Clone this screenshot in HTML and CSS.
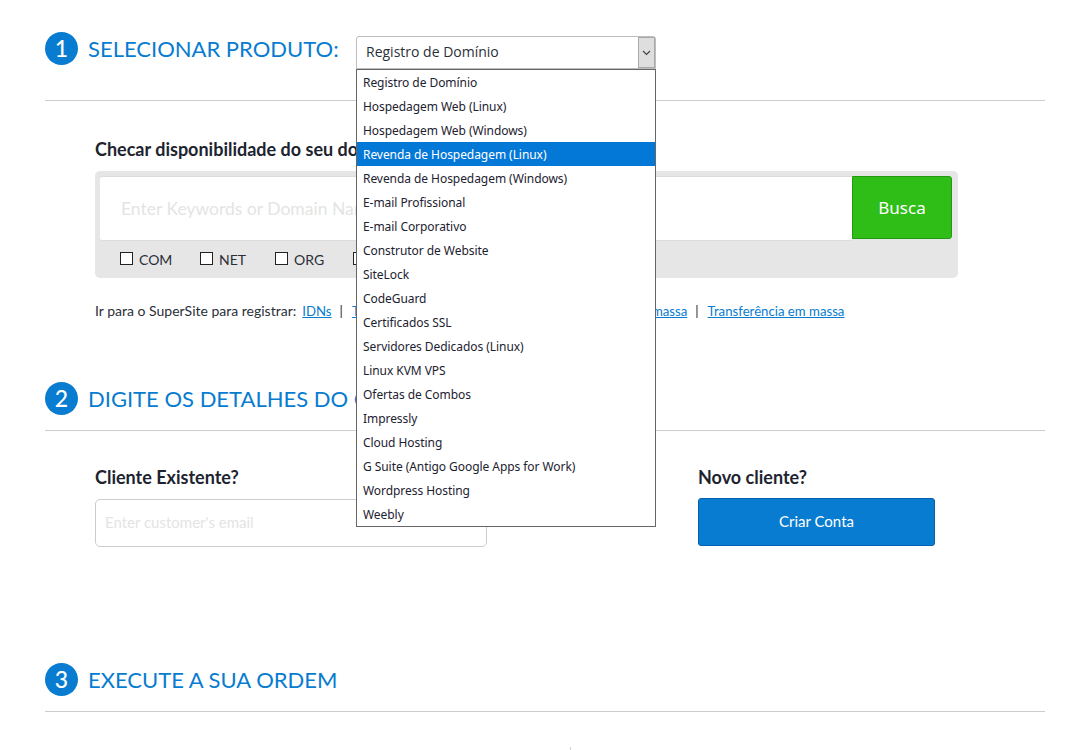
FILE: index.html
```html
<!DOCTYPE html>
<html lang="pt">
<head>
<meta charset="utf-8">
<title>Ordem</title>
<link rel="stylesheet" href="styles.css">
</head>
<body>
<main class="page">
  <header class="head head-first">
    <span class="num">1</span>
    <h2 class="title title-first">SELECIONAR PRODUTO:</h2>
    <div class="select">
      <span class="select-value">Registro de Domínio</span>
      <span class="select-btn">
        <svg width="9" height="6" viewBox="0 0 9 6"><path d="M1 1l3.5 3.5L8 1" fill="none" stroke="#444" stroke-width="1.2"/></svg>
      </span>
      <ul class="list">
        <li>Registro de Domínio</li>
        <li>Hospedagem Web (Linux)</li>
        <li>Hospedagem Web (Windows)</li>
        <li class="active">Revenda de Hospedagem (Linux)</li>
        <li>Revenda de Hospedagem (Windows)</li>
        <li>E-mail Profissional</li>
        <li>E-mail Corporativo</li>
        <li>Construtor de Website</li>
        <li>SiteLock</li>
        <li>CodeGuard</li>
        <li>Certificados SSL</li>
        <li>Servidores Dedicados (Linux)</li>
        <li>Linux KVM VPS</li>
        <li>Ofertas de Combos</li>
        <li>Impressly</li>
        <li>Cloud Hosting</li>
        <li>G Suite (Antigo Google Apps for Work)</li>
        <li>Wordpress Hosting</li>
        <li>Weebly</li>
      </ul>
    </div>
  </header>

  <section class="search-section">
    <h3 class="label">Checar disponibilidade do seu domínio</h3>
    <div class="panel">
      <div class="search-row">
        <div class="search-input">Enter Keywords or Domain Names</div>
        <button class="search-btn">Busca</button>
      </div>
      <div class="tlds">
        <label class="tld tld-com"><span class="box"></span>COM</label>
        <label class="tld tld-net"><span class="box"></span>NET</label>
        <label class="tld tld-org"><span class="box"></span>ORG</label>
        <label class="tld"><span class="box"></span>INFO</label>
      </div>
    </div>
    <p class="links">
      <span class="links-intro">Ir para o SuperSite para registrar:</span>
      <a href="#">IDNs</a><span class="sep">|</span>
      <a href="#">Transferência</a><span class="sep">|</span>
      <a href="#" class="bulk">Registro em massa</a><span class="sep">|</span>
      <a href="#">Transferência em massa</a>
    </p>
  </section>

  <header class="head">
    <span class="num">2</span>
    <h2 class="title">DIGITE OS DETALHES DO CLIENTE</h2>
  </header>

  <section class="customer">
    <div class="existing">
      <h3 class="label">Cliente Existente?</h3>
      <div class="email">Enter customer's email</div>
    </div>
    <div class="new">
      <h3 class="label">Novo cliente?</h3>
      <button class="create">Criar Conta</button>
    </div>
  </section>

  <header class="head">
    <span class="num">3</span>
    <h2 class="title">EXECUTE A SUA ORDEM</h2>
  </header>
  <div class="tick"></div>
</main>
</body>
</html>
```

FILE: styles.css
```css
* { box-sizing: border-box; }
html, body { margin: 0; padding: 0; background: #fff; overflow: hidden; }
body { height: 750px; font-family: "Open Sans", sans-serif; color: #1d2430; }
.page { width: 1045px; padding: 32px 0 0 45px; }

.head {
  display: flex;
  align-items: center;
  height: 33px;
  padding-bottom: 15px;
  border-bottom: 1px solid #ccc;
  box-sizing: content-box;
}
.head-first { padding-bottom: 35px; }
.num {
  flex: none;
  width: 33px;
  height: 33px;
  border-radius: 50%;
  background: #077cd0;
  color: #fff;
  font: 500 23px/33px "Lato", sans-serif;
  text-align: center;
}
.title {
  margin: 0 0 0 10px;
  font: 400 22px/33px "Lato", sans-serif;
  color: #077cd0;
  white-space: nowrap;
}
.title-first { width: 250px; flex: none; }

.select {
  position: relative;
  flex: none;
  width: 300px;
  height: 33px;
  margin: 4px 0 0 18px;
  display: flex;
  border: 1px solid #bdbdbd;
  border-radius: 3px 3px 0 0;
  background: #fff;
  align-self: flex-start;
}
.select-value {
  flex: 1;
  padding-left: 9px;
  font: 400 14px/29px "Open Sans", sans-serif;
  color: #2a2f38;
}
.select-btn {
  width: 17px;
  height: 31px;
  display: flex;
  align-items: center;
  justify-content: center;
  background: #dedede;
  border: 1px solid #a9a9a9;
}
.list {
  position: absolute;
  z-index: 5;
  left: -1px;
  top: 32px;
  width: 300px;
  height: 458px;
  margin: 0;
  padding: 0;
  list-style: none;
  background: #fff;
  border: 1px solid #666;
  font: 400 12px/26px "Noto Sans", sans-serif;
  letter-spacing: -0.06px;
  color: #1c2230;
}
.list li { height: 24px; padding-left: 6px; white-space: nowrap; }
.list .active { background: #0478d7; color: #fff; }

.search-section { padding-left: 50px; width: 913px; }
.label {
  margin: 0;
  font: 700 18px/20px "Lato", sans-serif;
  color: #1d2430;
  white-space: nowrap;
}
.search-section > .label { margin-top: 38px; }
.panel {
  margin-top: 12px;
  width: 863px;
  height: 107px;
  padding: 5px 6px 0 5px;
  background: #e6e6e6;
  border-radius: 5px;
}
.search-row { display: flex; height: 65px; align-items: flex-start; }
.search-input {
  flex: 1;
  height: 65px;
  padding-left: 21px;
  background: #fff;
  border: solid #dcdcdc;
  border-width: 1px 0 1px 0;
  border-radius: 3px 0 0 3px;
  font: 400 17.5px/64px "Lato", sans-serif;
  color: #e4e4e4;
  white-space: nowrap;
  overflow: hidden;
}
.search-btn {
  width: 100px;
  height: 63px;
  padding: 0;
  background: #2fbe18;
  border: 1px solid #229a10;
  border-radius: 0 3px 3px 0;
  color: #fff;
  font: 400 17px "Noto Sans", sans-serif;
}
.tlds { display: flex; padding: 11px 0 0 20px; }
.tld {
  display: flex;
  align-items: center;
  font: 400 14px/16px "Lato", sans-serif;
  color: #2a2f38;
}
.tld-com { width: 80px; }
.tld-net { width: 75px; }
.tld-org { width: 78px; }
.box {
  width: 13px;
  height: 13px;
  margin: 0 6px 3px 0;
  border: 1px solid #222;
  background: #fff;
}

.links {
  margin: 24px 0 0;
  display: flex;
  align-items: center;
  height: 18px;
  font: 400 13.2px/18px "Lato", sans-serif;
  color: #2a2f38;
  white-space: nowrap;
}
.links a { color: #077cd0; text-decoration: underline; }
.links-intro { margin-right: 6px; font-size: 14px; }
.sep { margin: 0 9px 0 8px; color: #1d2430; }
.bulk { margin-left: 131px; }

.search-section + .head { margin-top: 62px; }

.customer { display: flex; padding-left: 50px; height: 232px; padding-top: 36px; }
.existing { width: 603px; }
.email {
  margin-top: 12px;
  width: 392px;
  height: 48px;
  padding-left: 9px;
  border: 1px solid #ccc;
  border-radius: 5px;
  font: 400 15px/44px "Lato", sans-serif;
  color: #e4e4e4;
}
.create {
  display: block;
  margin-top: 11px;
  width: 237px;
  height: 48px;
  padding: 0 0 2px;
  background: #077cd0;
  border: 1px solid #0560ad;
  border-radius: 3px;
  color: #fff;
  font: 400 15px "Lato", sans-serif;
}
.tick { width: 1px; height: 4px; margin: 35px 0 0 525px; background: #ccc; }
```
